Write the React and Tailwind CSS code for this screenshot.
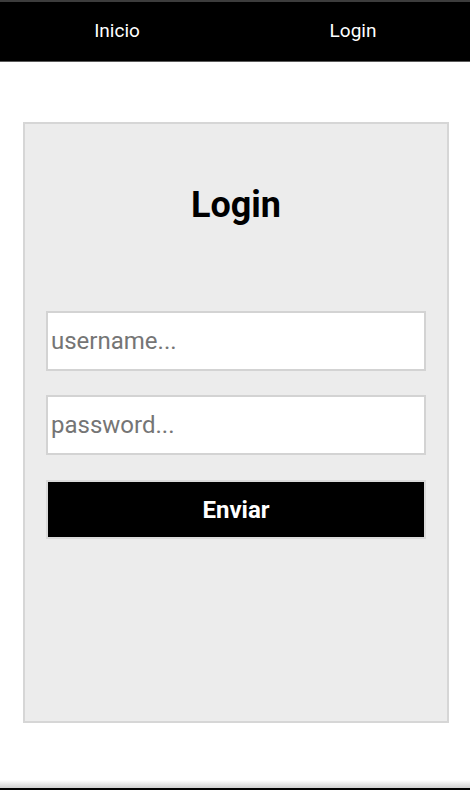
export default function App() {
  return (
    <div className="h-[790px] w-[470px] flex flex-col bg-white font-['Roboto',sans-serif] overflow-hidden">
      {/* Header */}
      <div className="h-[62px] shrink-0 flex bg-black border-t-2 border-[#3c3c3c] border-b border-b-[#5a5a5a]">
        <a className="flex-1 flex items-center justify-center text-white text-[19px]">Inicio</a>
        <a className="flex-1 flex items-center justify-center text-white text-[19px] pl-[2px]">Login</a>
      </div>

      {/* Card */}
      <div className="mt-[60px] ml-[23px] w-[426px] h-[601px] bg-[#ececec] border-2 border-[#d6d6d6] px-[21px] flex flex-col">
        <h1 className="mt-[61px] text-center text-[36px] leading-[40px] font-bold text-black">Login</h1>
        <input
          placeholder="username..."
          className="mt-[86px] h-[60px] bg-white border-2 border-[#d3d3d3] px-[3px] text-[24px] placeholder:text-[#757575] outline-none"
        />
        <input
          placeholder="password..."
          type="password"
          className="mt-[24px] h-[60px] bg-white border-2 border-[#d3d3d3] px-[3px] text-[24px] placeholder:text-[#757575] outline-none"
        />
        <button className="mt-[25px] h-[59px] bg-black border-2 border-[#dadada] text-white text-[24px] font-bold">
          Enviar
        </button>
      </div>

      <div className="flex-1" />
      {/* Bottom edge */}
      <div className="h-[8px] shrink-0 bg-gradient-to-b from-white to-[#cfcfcf]" />
      <div className="h-[2px] shrink-0 bg-black" />
    </div>
  );
}
